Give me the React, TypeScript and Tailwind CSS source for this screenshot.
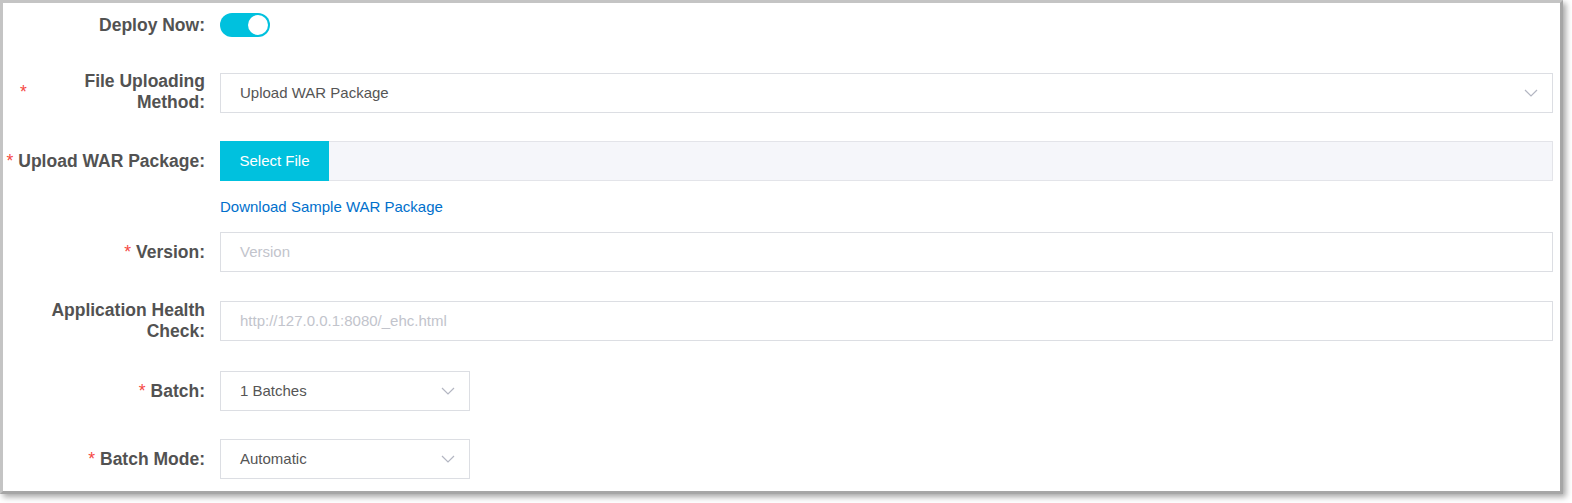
import React from "react";

const Star = () => <span className="text-[#f54743] mr-[5px] font-normal">*</span>;

const Chevron = () => (
  <svg width="14" height="8" viewBox="0 0 14 8" fill="none" className="shrink-0">
    <path d="M1 1 L7 7 L13 1" stroke="#b3b6c2" strokeWidth="1.2" />
  </svg>
);

function Row({ label, children, className = "" }: { label: React.ReactNode; children: React.ReactNode; className?: string }) {
  return (
    <div className={`flex items-center ${className}`}>
      <div className="w-[202px] shrink-0 flex justify-end items-center text-right font-bold text-[17.5px] leading-[21px] text-[#525252]">
        {label}
      </div>
      <div className="ml-[15px] flex-1 min-w-0">{children}</div>
    </div>
  );
}

export default function App() {
  return (
    <div className="w-[1572px] h-[503px] bg-white" style={{ fontFamily: '"Liberation Sans", Arial, sans-serif' }}>
      <div className="w-[1563px] h-[494px] border-l-[3px] border-t-[3px] border-r-[3px] border-b-[3px] border-l-[#c4c4c4] border-t-[#c4c4c4] border-r-[#a6a6a6] border-b-[#a6a6a6] shadow-[3px_3px_6px_rgba(0,0,0,0.35)] bg-white pt-[2px] pr-[7px]">
        <Row label="Deploy Now:" className="h-[40px]">
          <div className="w-[50px] h-[24px] rounded-full bg-[#00c1de] flex items-center justify-end pr-[2px]">
            <div className="w-[20px] h-[20px] rounded-full bg-white" />
          </div>
        </Row>

        <div className="flex items-center h-[40px] mt-[28px]">
          <div className="w-[202px] shrink-0 flex justify-between items-center font-bold text-[17.5px] leading-[21px] text-[#525252] -mt-[3px]">
            <span className="text-[#f54743] font-normal ml-[17px] mt-[2px]">*</span>
            <span className="text-right">File Uploading<br />Method:</span>
          </div>
          <div className="ml-[15px] flex-1 h-[40px] border border-[#dcdee3] bg-white flex items-center justify-between pl-[19px] pr-[14px] text-[15px] text-[#555]">
            <span>Upload WAR Package</span>
            <Chevron />
          </div>
        </div>

        <Row label={<><Star />Upload WAR Package:</>} className="h-[40px] mt-[28px]">
          <div className="h-[40px] border border-[#e3e4e9] bg-[#f5f6fa] flex">
            <div className="w-[109px] -my-px -ml-px bg-[#00c1de] text-white text-[15px] flex items-center justify-center">Select File</div>
          </div>
        </Row>

        <div className="flex mt-[16px] h-[21px] items-center">
          <div className="w-[217px] shrink-0" />
          <span className="text-[15px] text-[#0070cc]">Download Sample WAR Package</span>
        </div>

        <Row label={<><Star />Version:</>} className="h-[40px] mt-[14px]">
          <div className="h-[40px] border border-[#dcdee3] bg-white flex items-center pl-[19px] text-[15px] text-[#c2c4cc]">Version</div>
        </Row>

        <Row label={<span>Application Health<br />Check:</span>} className="h-[40px] mt-[29px]">
          <div className="h-[40px] border border-[#dcdee3] bg-white flex items-center pl-[19px] text-[15px] text-[#c2c4cc]">http://127.0.0.1:8080/_ehc.html</div>
        </Row>

        <Row label={<><Star />Batch:</>} className="h-[40px] mt-[30px]">
          <div className="w-[250px] h-[40px] border border-[#dcdee3] bg-white flex items-center justify-between pl-[19px] pr-[14px] text-[15px] text-[#555]">
            <span>1 Batches</span>
            <Chevron />
          </div>
        </Row>

        <Row label={<><Star />Batch Mode:</>} className="h-[40px] mt-[28px]">
          <div className="w-[250px] h-[40px] border border-[#dcdee3] bg-white flex items-center justify-between pl-[19px] pr-[14px] text-[15px] text-[#555]">
            <span>Automatic</span>
            <Chevron />
          </div>
        </Row>
      </div>
    </div>
  );
}
